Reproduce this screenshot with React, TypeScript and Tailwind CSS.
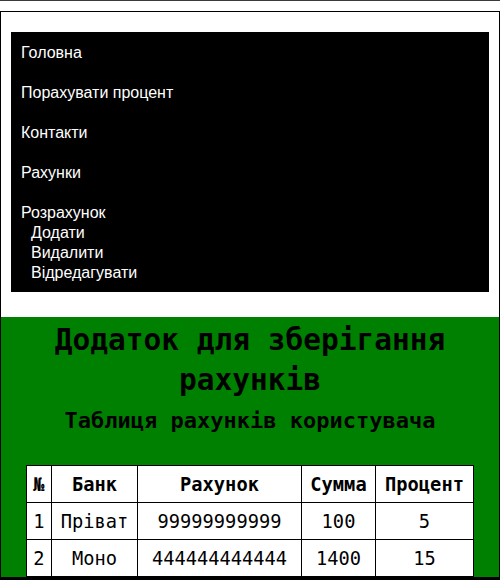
import React from "react";

const mono = { fontFamily: '"DejaVu Sans Mono", monospace' };

export default function App() {
  const rows = [
    ["1", "Пріват", "99999999999", "100", "5"],
    ["2", "Моно", "444444444444", "1400", "15"],
  ];
  return (
    <div className="w-[500px] bg-white">
      <div className="h-px bg-[#3a3a3a]" />
      <div className="pt-[10px]">
        <div className="border border-black">
          <header className="pt-[20px] pb-[25px] px-[10px] bg-white">
            <nav
              className="bg-black text-white text-[16px] leading-[20px] pt-[11px] pb-[9px] px-[10px]"
              style={{ fontFamily: '"Liberation Sans", Arial, sans-serif' }}
            >
              <ul className="flex flex-col">
                <li className="mb-[20px]">Головна</li>
                <li className="mb-[20px]">Порахувати процент</li>
                <li className="mb-[20px]">Контакти</li>
                <li className="mb-[20px]">Рахунки</li>
                <li>
                  Розрахунок
                  <ul className="pl-[10px]">
                    <li>Додати</li>
                    <li>Видалити</li>
                    <li>Відредагувати</li>
                  </ul>
                </li>
              </ul>
            </nav>
          </header>
          <section className="bg-[#008000] pt-[3px] text-black" style={mono}>
            <h1 className="text-center font-bold text-[29.5px] leading-[40px] px-[40px]">
              Додаток для зберігання рахунків
            </h1>
            <h2 className="text-center font-bold text-[22px] leading-[26px] mt-[8px]">
              Таблиця рахунків користувача
            </h2>
            <table className="mt-[31px] mx-auto w-[447px] table-fixed border-collapse bg-white text-[18.72px] leading-[22px]">
              <colgroup>
                <col className="w-[25px]" />
                <col className="w-[86px]" />
                <col className="w-[164px]" />
                <col className="w-[74px]" />
                <col className="w-[98px]" />
              </colgroup>
              <thead>
                <tr>
                  {["№", "Банк", "Рахунок", "Сумма", "Процент"].map((h) => (
                    <th key={h} className="border border-black pt-[8px] pb-[6px] px-0 font-bold text-center">
                      {h}
                    </th>
                  ))}
                </tr>
              </thead>
              <tbody>
                {rows.map((r) => (
                  <tr key={r[0]}>
                    {r.map((c, i) => (
                      <td key={i} className="border border-black pt-[8px] pb-[6px] px-0 text-center">
                        {c}
                      </td>
                    ))}
                  </tr>
                ))}
              </tbody>
            </table>
          </section>
          <div className="h-[20px] bg-black" />
        </div>
      </div>
    </div>
  );
}
